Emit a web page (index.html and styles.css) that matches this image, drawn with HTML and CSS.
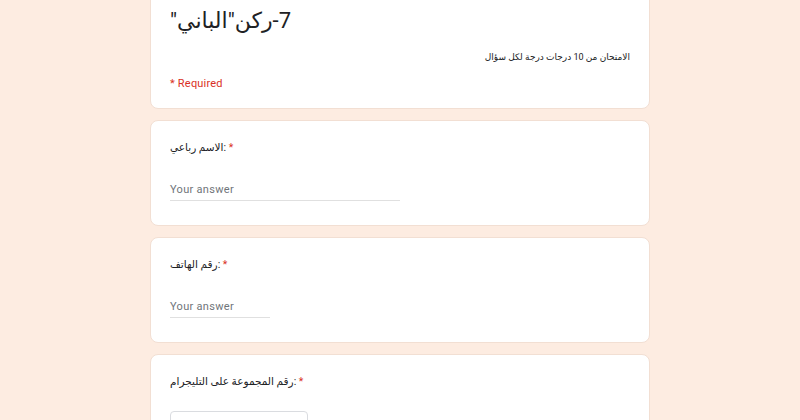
FILE: index.html
```html
<!DOCTYPE html>
<html lang="ar">
<head>
<meta charset="utf-8">
<title>7-ركن"الباني"</title>
<link rel="stylesheet" href="styles.css">
</head>
<body>
<main class="form">
  <section class="card header-card">
    <h1 class="title" dir="rtl">7-ركن"الباني"</h1>
    <p class="desc" dir="rtl">الامتحان من 10 درجات درجة لكل سؤال</p>
    <p class="required-note">* Required</p>
  </section>

  <section class="card question">
    <div class="label">الاسم رباعي:<span class="star"> *</span></div>
    <div class="answer wide">Your answer</div>
  </section>

  <section class="card question">
    <div class="label">رقم الهاتف:<span class="star"> *</span></div>
    <div class="answer narrow">Your answer</div>
  </section>

  <section class="card question">
    <div class="label">رقم المجموعة على التليجرام:<span class="star"> *</span></div>
    <div class="select-box"></div>
  </section>
</main>
</body>
</html>
```

FILE: styles.css
```css
html, body {
  margin: 0;
  padding: 0;
  background: #fdece1;
  font-family: Roboto, "DejaVu Sans", "Liberation Sans", sans-serif;
  color: #202124;
  overflow: hidden;
}

.form {
  width: 500px;
  margin: -14px auto 0;
  display: flex;
  flex-direction: column;
  gap: 11px;
}

.card {
  background: #ffffff;
  border: 1px solid #f2dfd3;
  border-radius: 8px;
  padding: 0 19px;
}

.header-card {
  padding-top: 18px;
  padding-bottom: 16px;
}

.title {
  margin: 0;
  font-size: 22px;
  font-weight: 400;
  line-height: 32px;
  text-align: left;
  color: #202124;
}

.desc {
  margin: 13px 0 0;
  font-size: 9px;
  line-height: 14px;
  color: #202124;
  text-align: right;
}

.required-note {
  margin: 12px 0 0;
  font-size: 11px;
  line-height: 16px;
  color: #d93025;
  letter-spacing: 0.2px;
}

.question {
  padding-top: 19px;
  padding-bottom: 24px;
}

.label {
  font-size: 10.5px;
  line-height: 16px;
  color: #202124;
}

.star {
  color: #d93025;
}

.answer {
  margin-top: 23px;
  height: 22px;
  line-height: 22px;
  font-size: 11px;
  color: #70757a;
  letter-spacing: 0.3px;
  border-bottom: 1px solid #e0e0e0;
  box-sizing: border-box;
}

.answer.wide {
  width: 230px;
}

.answer.narrow {
  width: 100px;
}

.select-box {
  margin-top: 21px;
  width: 138px;
  height: 40px;
  border: 1px solid #dadce0;
  border-radius: 4px;
  box-sizing: border-box;
}
```
